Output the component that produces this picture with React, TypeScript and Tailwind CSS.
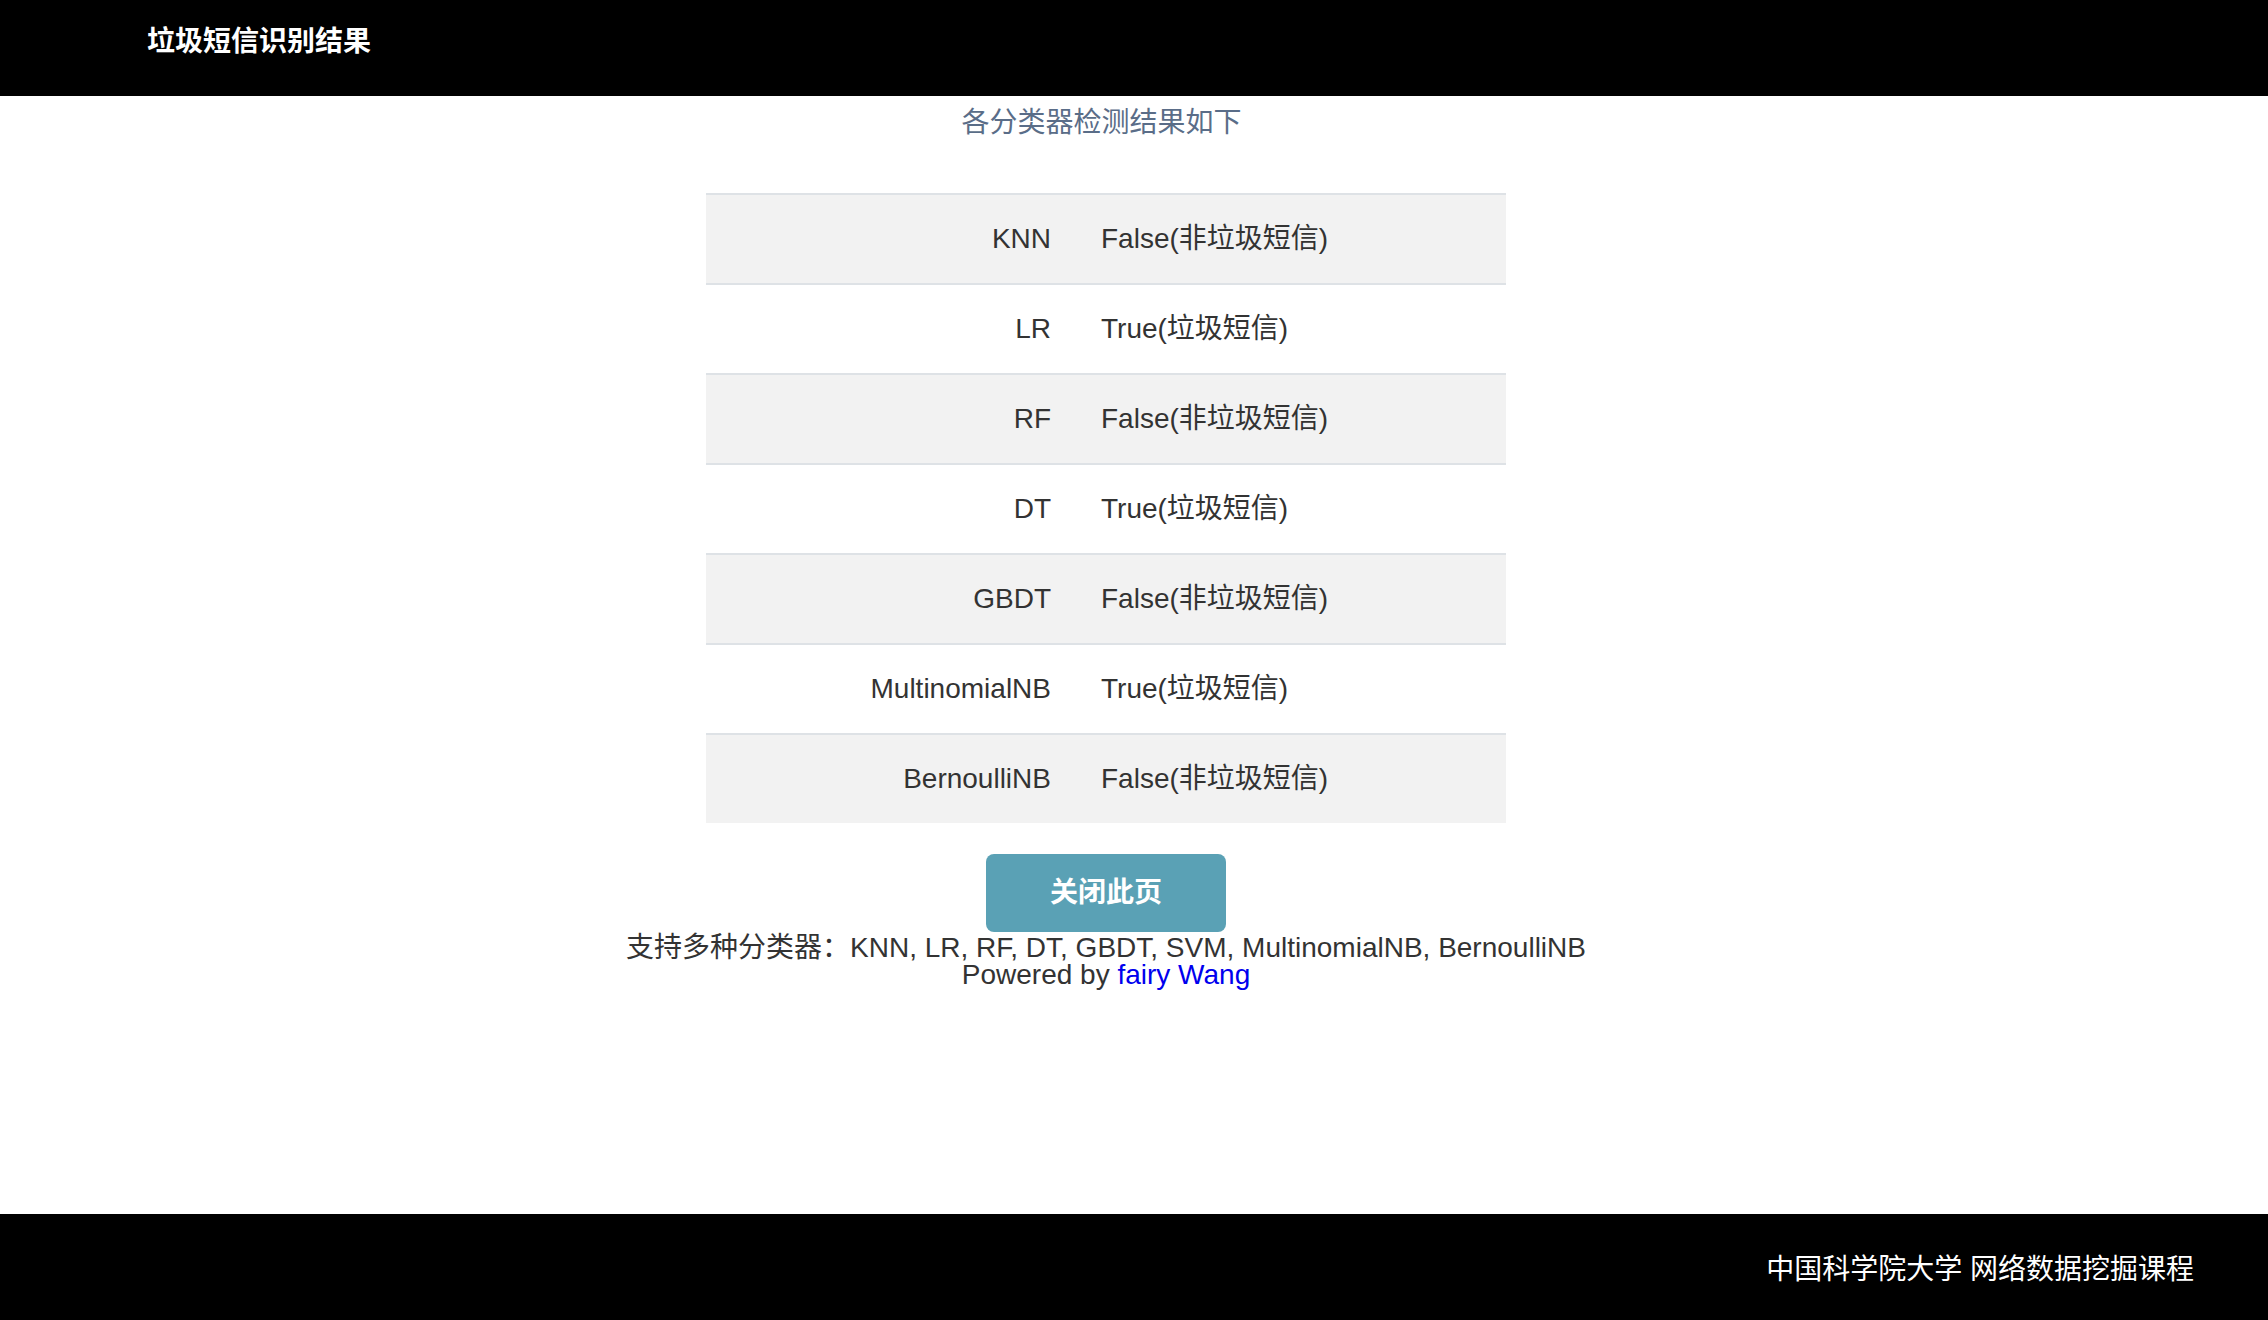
const results = [
  { name: 'KNN', spam: false },
  { name: 'LR', spam: true },
  { name: 'RF', spam: false },
  { name: 'DT', spam: true },
  { name: 'GBDT', spam: false },
  { name: 'MultinomialNB', spam: true },
  { name: 'BernoulliNB', spam: false },
];

const App = () => {
  return (
    <div className="min-h-[1320px] flex flex-col bg-white font-['Liberation_Sans','Noto_Sans_CJK_SC',sans-serif] text-[#333]">
      <header className="h-[96px] bg-black pl-[147px] pt-[28px]">
        <div className="text-[28px] leading-[28px] font-bold text-white">垃圾短信识别结果</div>
      </header>

      <main className="flex-1 w-[2212px] flex flex-col items-center">
        <div className="h-[54px] leading-[54px] pr-[9px] text-[28px] text-[#5a6d88]">各分类器检测结果如下</div>

        <div className="mt-[43px] w-[800px]">
          {results.map((r, i) => (
            <div
              key={r.name}
              className={`h-[90px] flex items-center border-t-2 border-[#dee2e6] text-[28px] ${
                i % 2 === 0 ? 'bg-[#f2f2f2]' : 'bg-white'
              }`}
            >
              <div className="w-[345px] text-right">{r.name}</div>
              <div className="pl-[50px]">{r.spam ? 'True(垃圾短信)' : 'False(非垃圾短信)'}</div>
            </div>
          ))}
        </div>

        <button className="mt-[31px] w-[240px] h-[78px] rounded-[8px] bg-[#5aa1b5] text-white text-[28px] font-bold">
          关闭此页
        </button>

        <div className="pt-[2px] text-[28px] leading-[27px] text-center text-[#333]">
          <div>支持多种分类器：KNN, LR, RF, DT, GBDT, SVM, MultinomialNB, BernoulliNB</div>
          <div>
            Powered by <a className="text-[#0000ee]">fairy Wang</a>
          </div>
        </div>
      </main>

      <footer className="h-[106px] bg-black flex items-center justify-end pr-[74px] pt-[6px]">
        <div className="text-[28px] text-white">中国科学院大学 网络数据挖掘课程</div>
      </footer>
    </div>
  );
};

export default App;
